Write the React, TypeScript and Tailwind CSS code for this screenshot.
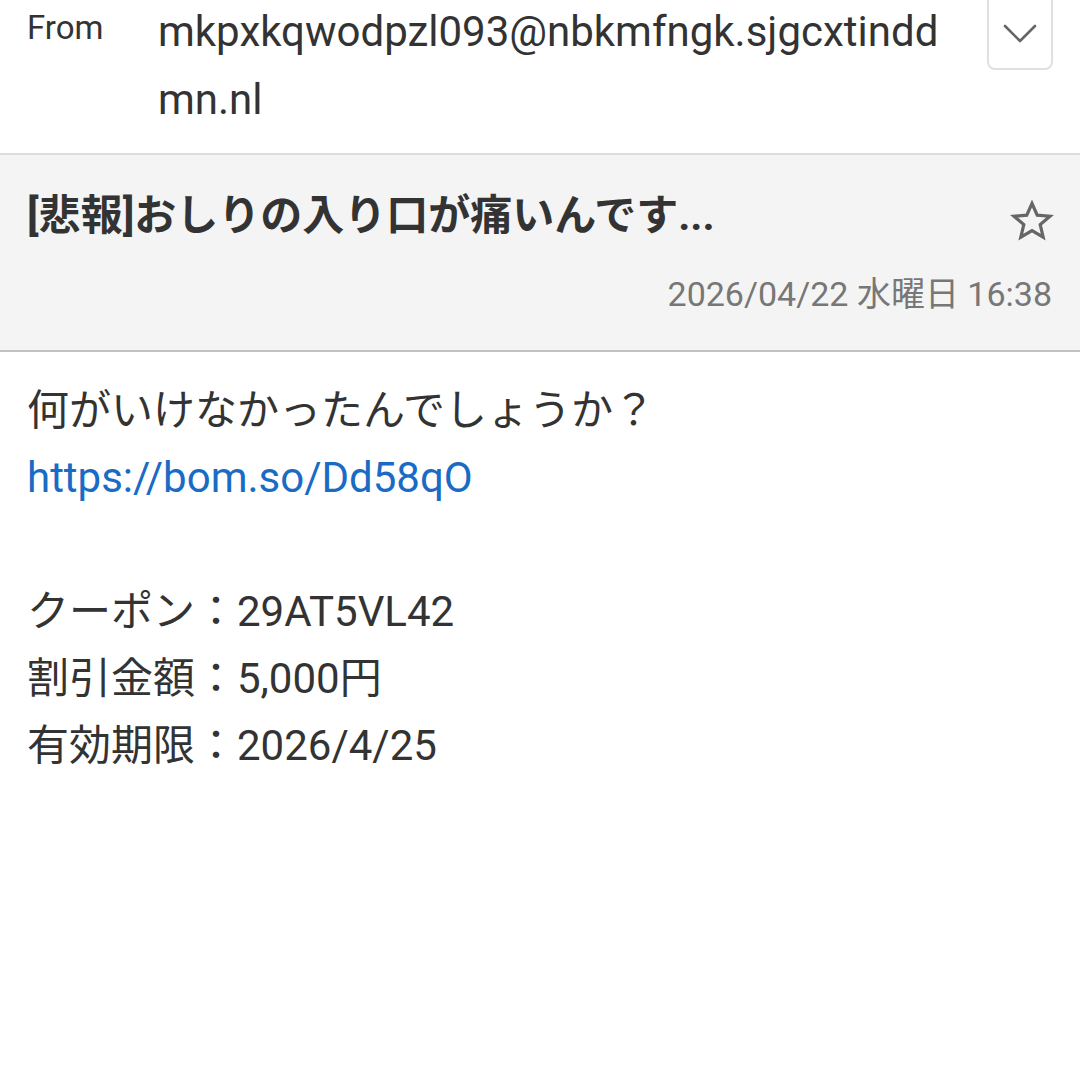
import React from "react";

const font = { fontFamily: 'Roboto, "Noto Sans CJK JP", sans-serif' };

export default function App() {
  return (
    <div className="w-[1080px] h-[1080px] bg-white text-[#333333] overflow-hidden" style={font}>
      {/* From row */}
      <div className="flex h-[153px] pl-[27px] border-b-2 border-[#dcdcdc] box-content">
        <div className="w-[131px] text-[33px] leading-[56px] text-[#333]">From</div>
        <div className="w-[805px] text-[42px] leading-[68px] break-all -mt-[2px]">
          mkpxkqwodpzl093@nbkmfngk.sjgcxtinddmn.nl
        </div>
        <div className="ml-[24px] -mt-[10px] w-[66px] h-[80px] rounded-[8px] border-2 border-[#e0e0e0] flex items-end justify-center pb-[24px]">
          <svg width="34" height="20" viewBox="0 0 34 20" fill="none">
            <path d="M2 2 L17 17 L32 2" stroke="#666" strokeWidth="2.6" strokeLinecap="round" strokeLinejoin="round" />
          </svg>
        </div>
      </div>
      {/* Subject */}
      <div className="h-[195px] bg-[#f4f4f4] border-b-2 border-[#c2c2c2] box-content flex flex-col">
        <div className="flex items-center pl-[27px] pr-[24px] pt-[32px]">
          <div className="flex-1 text-[42px] font-bold leading-[56px]">[悲報]おしりの入り口が痛いんです...</div>
          <svg width="48" height="48" viewBox="0 0 24 24" className="mt-[10px]">
            <path
              d="M12 3.2 L14.6 9.1 L21 9.6 L16.1 13.8 L17.6 20.1 L12 16.8 L6.4 20.1 L7.9 13.8 L3 9.6 L9.4 9.1 Z"
              fill="none"
              stroke="#666"
              strokeWidth="1.6"
              strokeLinejoin="miter"
            />
          </svg>
        </div>
        <div className="text-right pr-[28px] text-[34px] leading-[44px] text-[#777] mt-[27px]">
          2026/04/22 水曜日 16:38
        </div>
      </div>
      {/* Body */}
      <div className="pl-[27px] pt-[25px] text-[42px] leading-[67px]">
        <div>何がいけなかったんでしょうか？</div>
        <div className="text-[#1a6bc4]">https://bom.so/Dd58qO</div>
        <div>&nbsp;</div>
        <div>クーポン：29AT5VL42</div>
        <div>割引金額：5,000円</div>
        <div>有効期限：2026/4/25</div>
      </div>
    </div>
  );
}
